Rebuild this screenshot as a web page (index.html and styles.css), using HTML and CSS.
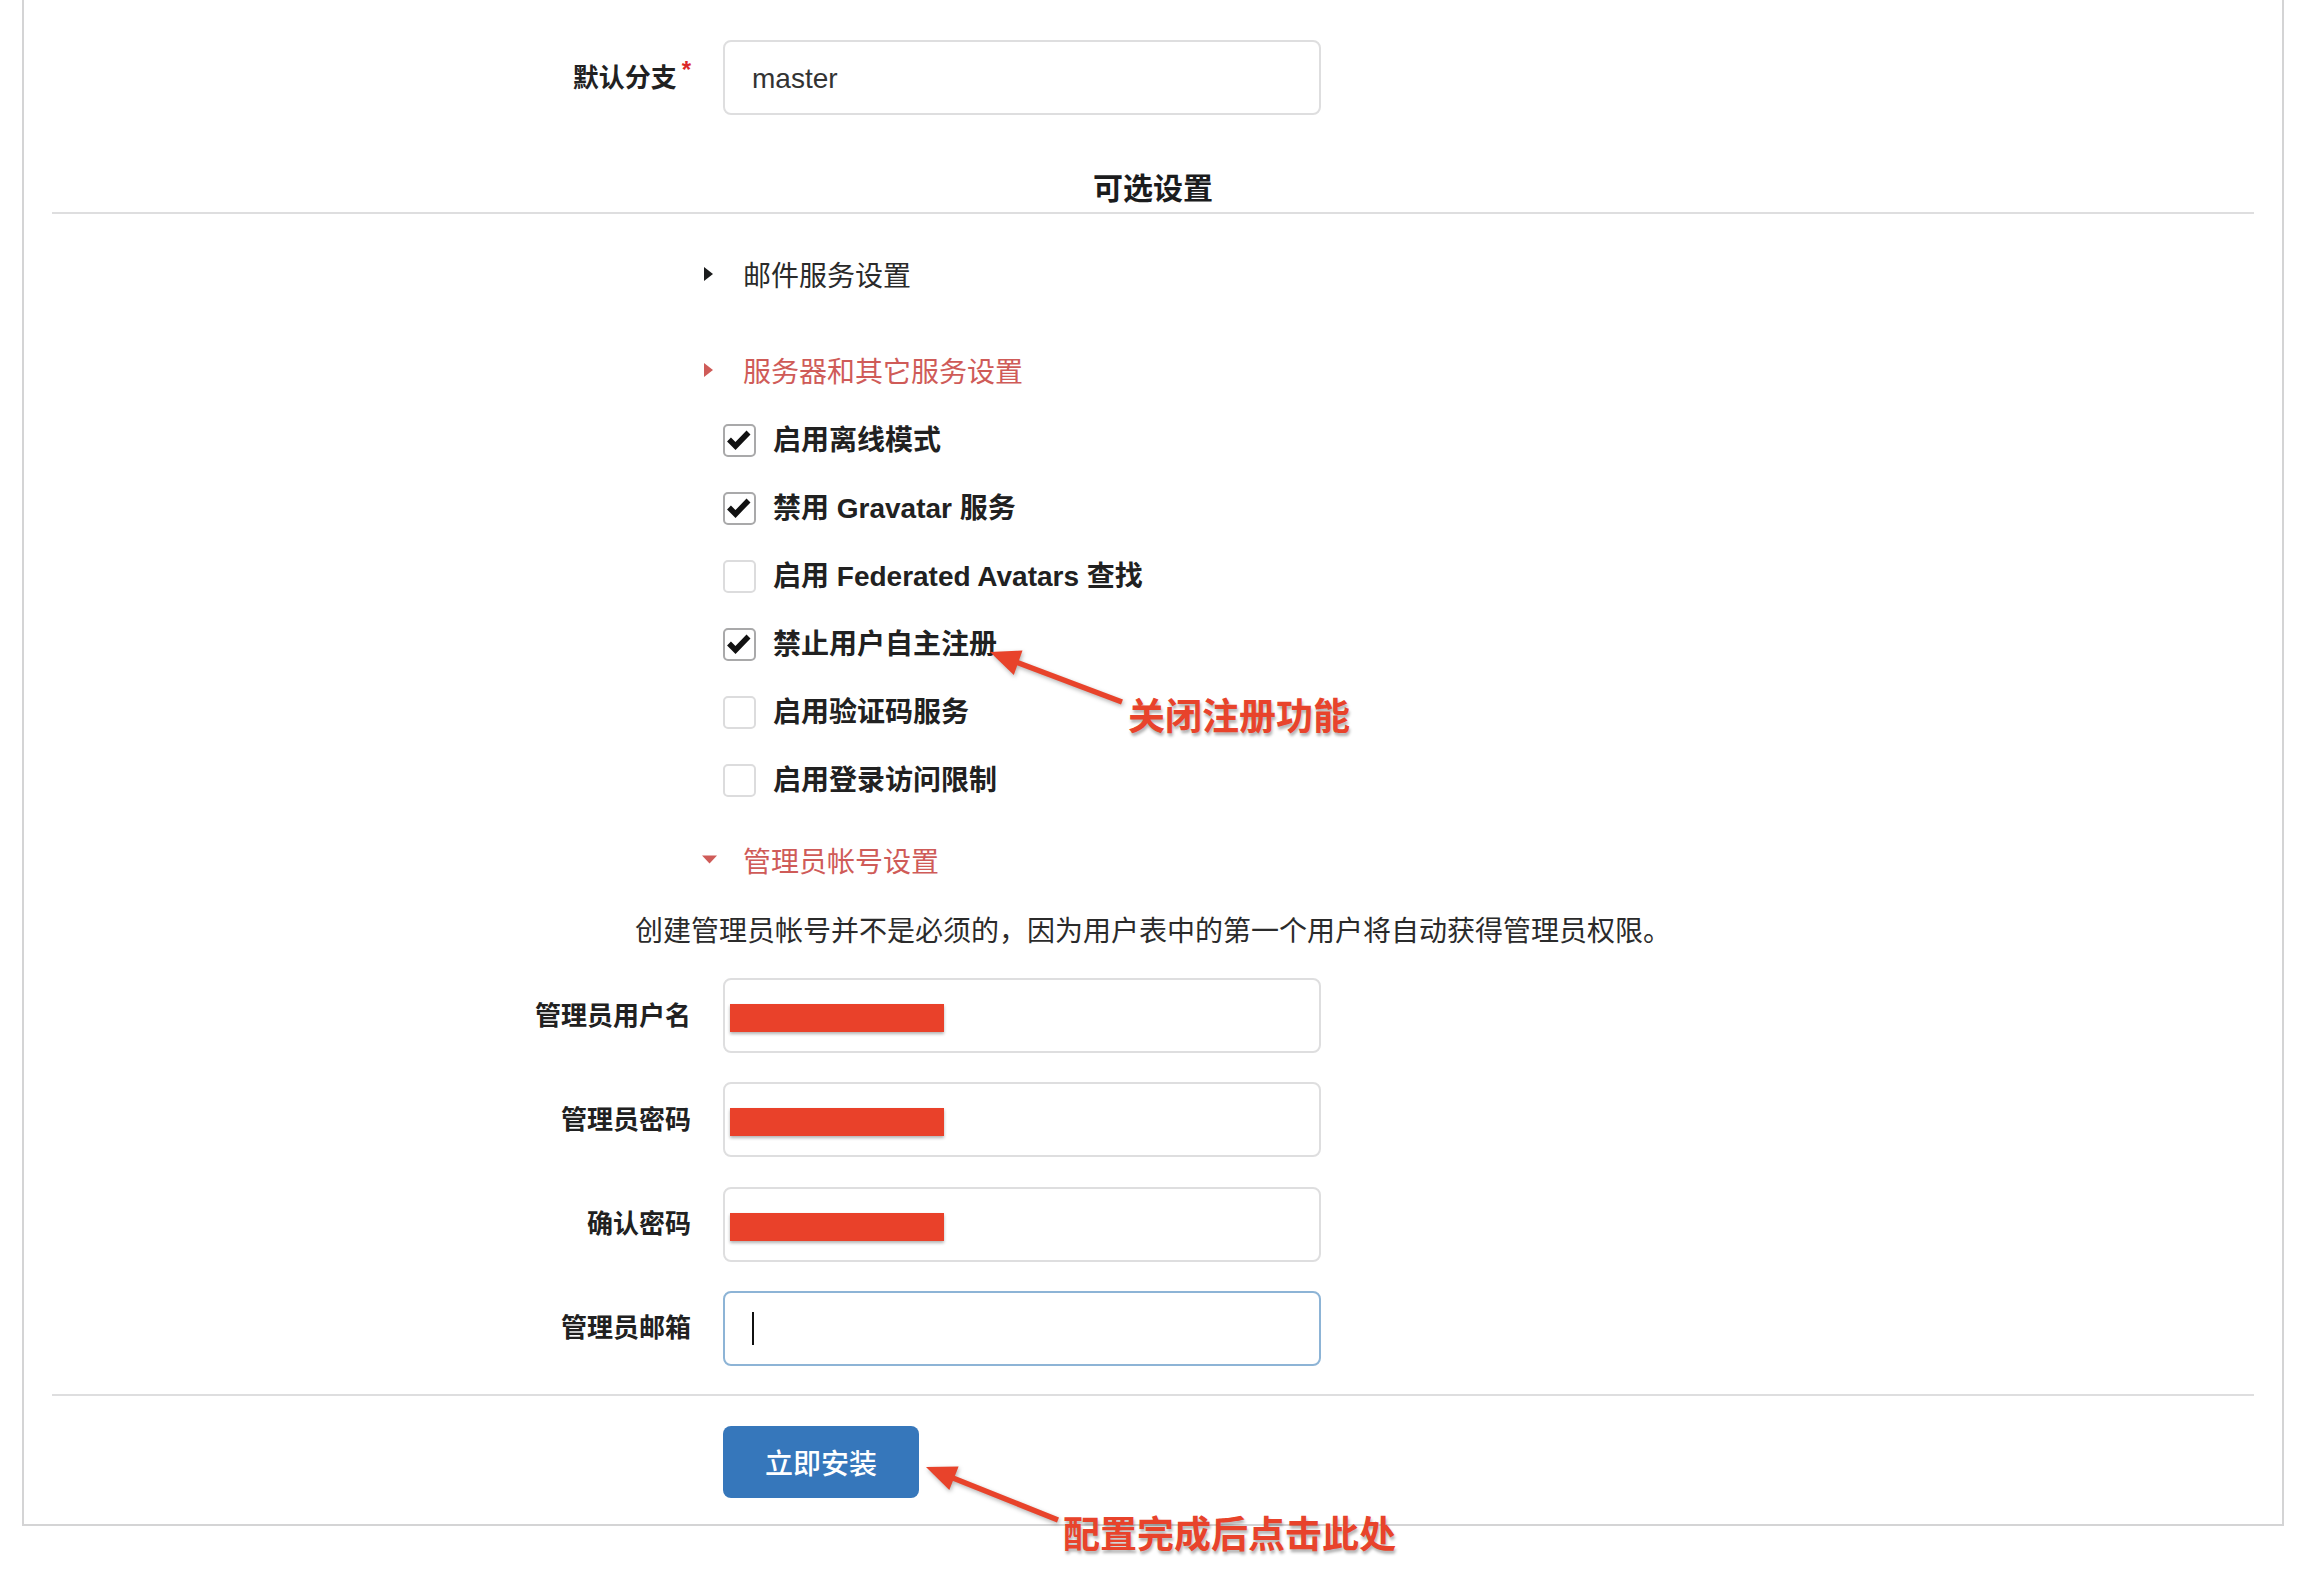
FILE: index.html
```html
<!DOCTYPE html>
<html lang="zh-CN">
<head>
<meta charset="utf-8">
<title>安装</title>
<link rel="stylesheet" href="styles.css">
</head>
<body>
<div class="page">
  <div class="card">
    <div class="form-row">
      <label class="flabel">默认分支<span class="req">*</span></label>
      <div class="input"><span class="value">master</span></div>
    </div>

    <h3 class="dividing">可选设置</h3>

    <div class="acc-title acc1">
      <svg class="tri" viewBox="0 0 16 20"><polygon points="2,1 11,8 2,15" fill="#1b1c1d"/></svg>
      <span class="acc-text dark">邮件服务设置</span>
    </div>

    <div class="acc-title acc2">
      <svg class="tri" viewBox="0 0 16 20"><polygon points="2,1 11,8 2,15" fill="#cf5b58"/></svg>
      <span class="acc-text red">服务器和其它服务设置</span>
    </div>

    <div class="checks">
      <div class="check-row">
        <span class="box checked"><svg class="tick" viewBox="0 0 29 29"><polyline points="4,13.5 10.5,20 23.5,6.5" fill="none" stroke="#111" stroke-width="5.5"/></svg></span>
        <span class="clabel">启用离线模式</span>
      </div>
      <div class="check-row">
        <span class="box checked"><svg class="tick" viewBox="0 0 29 29"><polyline points="4,13.5 10.5,20 23.5,6.5" fill="none" stroke="#111" stroke-width="5.5"/></svg></span>
        <span class="clabel">禁用 Gravatar 服务</span>
      </div>
      <div class="check-row">
        <span class="box"></span>
        <span class="clabel">启用 Federated Avatars 查找</span>
      </div>
      <div class="check-row">
        <span class="box checked"><svg class="tick" viewBox="0 0 29 29"><polyline points="4,13.5 10.5,20 23.5,6.5" fill="none" stroke="#111" stroke-width="5.5"/></svg></span>
        <span class="clabel">禁止用户自主注册</span>
      </div>
      <div class="check-row">
        <span class="box"></span>
        <span class="clabel">启用验证码服务</span>
      </div>
      <div class="check-row">
        <span class="box"></span>
        <span class="clabel">启用登录访问限制</span>
      </div>
    </div>

    <div class="acc-title acc3">
      <svg class="tri" viewBox="0 0 16 20"><polygon points="0,3.5 15,3.5 7.5,11.5" fill="#cf5b58"/></svg>
      <span class="acc-text red">管理员帐号设置</span>
    </div>

    <p class="desc">创建管理员帐号并不是必须的，因为用户表中的第一个用户将自动获得管理员权限。</p>

    <div class="fields">
      <div class="form-row">
        <label class="flabel">管理员用户名</label>
        <div class="input redacted"><span class="mask"></span></div>
      </div>
      <div class="form-row">
        <label class="flabel">管理员密码</label>
        <div class="input redacted"><span class="mask"></span></div>
      </div>
      <div class="form-row">
        <label class="flabel">确认密码</label>
        <div class="input redacted"><span class="mask"></span></div>
      </div>
      <div class="form-row">
        <label class="flabel">管理员邮箱</label>
        <div class="input focus"><span class="caret"></span></div>
      </div>
    </div>

    <div class="divider"></div>

    <div class="actions">
      <button class="btn">立即安装</button>
    </div>
  </div>

  <svg class="arrows" viewBox="0 0 2306 1580">
    <line x1="1122" y1="702" x2="1012" y2="660.5" stroke="#e8432b" stroke-width="5.5"/>
    <polygon points="990,652 1013.8,675 1022.5,650.5" fill="#e8432b"/>
    <line x1="1058" y1="1520" x2="948" y2="1476" stroke="#e8432b" stroke-width="5.5"/>
    <polygon points="926,1467 949.3,1490 958.6,1466.4" fill="#e8432b"/>
  </svg>
  <div class="note note1">关闭注册功能</div>
  <div class="note note2">配置完成后点击此处</div>
</div>
</body>
</html>
```

FILE: styles.css
```css
html, body {
  margin: 0;
  padding: 0;
  background: #ffffff;
}

body {
  width: 2306px;
  height: 1580px;
  overflow: hidden;
  font-family: "Liberation Sans", "Noto Sans CJK SC", sans-serif;
  color: #212121;
}

.page {
  position: relative;
  width: 2306px;
  height: 1580px;
}

.card {
  margin: 0 22px;
  box-sizing: border-box;
  height: 1526px;
  border: 2px solid #d4d4d5;
  border-top: 0;
  padding: 40px 28px 0;
}

/* form rows */
.form-row {
  display: grid;
  grid-template-columns: 639px 598px;
  column-gap: 32px;
  align-items: center;
  height: 75px;
}

.flabel {
  text-align: right;
  font-size: 26px;
  font-weight: 700;
  line-height: 36px;
  color: #212121;
  white-space: nowrap;
}

.req {
  color: #db2828;
  font-size: 24px;
  line-height: 0;
  margin-left: 5px;
  vertical-align: 9px;
}

.input {
  box-sizing: border-box;
  height: 75px;
  border: 2px solid #dededf;
  border-radius: 8px;
  display: flex;
  align-items: center;
  padding-left: 27px;
  background: #fff;
}

.input.redacted {
  padding-left: 5px;
}

.input.focus {
  border-color: #8db4d6;
}

.value {
  font-size: 28px;
  color: #333333;
  margin-top: 2px;
}

.mask {
  display: block;
  width: 214px;
  height: 28px;
  margin-top: 5px;
  background: #e9412a;
  box-shadow: 0 2px 3px rgba(0, 0, 0, 0.3);
}

.caret {
  display: block;
  width: 2px;
  height: 33px;
  background: #111;
}

/* header */
.dividing {
  margin: 52px 0 0;
  font-size: 30px;
  font-weight: 700;
  line-height: 40px;
  text-align: center;
  padding: 2px 0 3px;
  border-bottom: 2px solid #dededf;
  color: #1b1c1d;
}

/* accordion titles */
.acc-title {
  display: flex;
  align-items: center;
  height: 40px;
  margin-left: 650px;
}

.acc1 { margin-top: 42px; }
.acc2 { margin-top: 56px; }
.acc3 { margin-top: 42px; }

.tri {
  flex: none;
  width: 16px;
  height: 20px;
}

.acc-text {
  margin-left: 25px;
  margin-top: 2px;
  font-size: 28px;
  line-height: 40px;
}

.acc-text.dark { color: #2a2a2a; }
.acc-text.red { color: #cf5b58; }

/* checkboxes */
.checks {
  margin-top: 28px;
  margin-left: 671px;
  display: flex;
  flex-direction: column;
  gap: 28px;
}

.check-row {
  display: flex;
  align-items: center;
  height: 40px;
}

.box {
  flex: none;
  box-sizing: border-box;
  width: 33px;
  height: 33px;
  border: 2px solid #dcdcdd;
  border-radius: 5px;
  display: flex;
}

.box.checked {
  border-color: #a9a9aa;
}

.tick {
  width: 29px;
  height: 29px;
}

.clabel {
  margin-left: 17px;
  margin-top: 2px;
  font-size: 28px;
  font-weight: 700;
  line-height: 40px;
  color: #212121;
  white-space: nowrap;
}

/* description */
.desc {
  margin: 28px 0 0;
  padding-top: 2px;
  height: 38px;
  font-size: 28px;
  line-height: 40px;
  text-align: center;
  color: #2b2b2b;
}

.fields {
  margin-top: 28px;
  display: flex;
  flex-direction: column;
  gap: 29.3px;
}

.divider {
  margin-top: 28px;
  height: 2px;
  background: #dededf;
}

.actions {
  margin-top: 30px;
  padding-left: 671px;
}

.btn {
  display: block;
  width: 196px;
  height: 72px;
  padding: 0;
  border: 0;
  border-radius: 8px;
  background: #3677bb;
  color: #ffffff;
  font-family: "Liberation Sans", "Noto Sans CJK SC", sans-serif;
  font-size: 28px;
  font-weight: 500;
}

/* annotations */
.arrows {
  position: absolute;
  left: 0;
  top: 0;
  width: 2306px;
  height: 1580px;
  pointer-events: none;
  filter: drop-shadow(1px 2px 2px rgba(0, 0, 0, 0.3));
}

.note {
  position: absolute;
  font-family: "Noto Sans CJK SC", sans-serif;
  font-size: 37px;
  font-weight: 700;
  line-height: 40px;
  color: #e8432b;
  white-space: nowrap;
  text-shadow: 1px 3px 3px rgba(0, 0, 0, 0.3);
}

.note1 {
  left: 1128px;
  top: 694px;
}

.note2 {
  left: 1063px;
  top: 1512px;
}
```
